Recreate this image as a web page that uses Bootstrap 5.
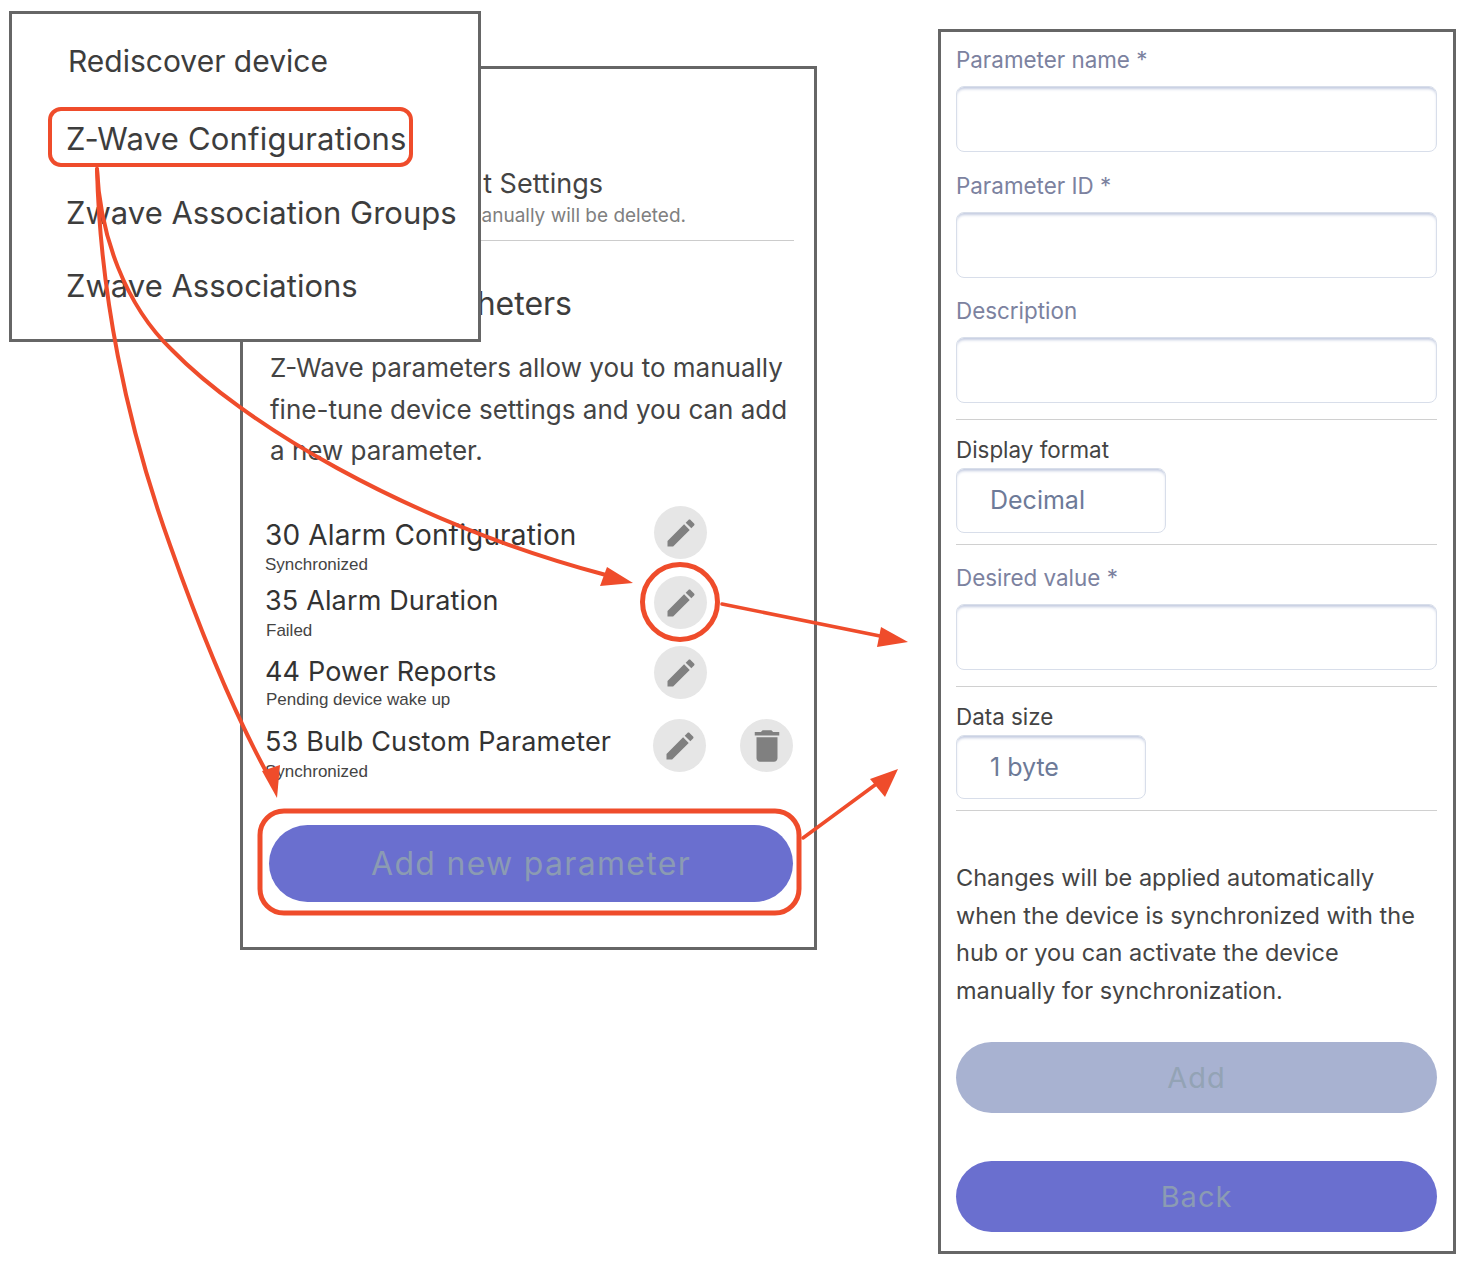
<!DOCTYPE html>
<html lang="en">
<head>
  <meta charset="UTF-8" />
  <title>Z-Wave Parameters</title>
  <link href="https://cdn.jsdelivr.net/npm/bootstrap@5.3.0/dist/css/bootstrap.min.css" rel="stylesheet">
  <style>
    body {
      background: #fff;
      font-family: "Inter", "Liberation Sans", sans-serif;
      color: #3d3d3d;
      width: 1458px;
      height: 1263px;
      position: relative;
      overflow: hidden;
    }
    .shot-win {
      position: absolute;
      background: #fff;
      border: 3px solid #666;
    }
    .win-main { left: 240px; top: 66px; width: 577px; height: 884px; padding: 98px 20px 0 27px; }
    .win-menu { left: 9px; top: 11px; width: 472px; height: 331px; padding: 16px 0 0 54px; }
    .win-form { left: 938px; top: 29px; width: 518px; height: 1225px; padding: 14px 16px 0 15px; }

    .menu-line { font-size: 31px; height: 74px; line-height: 62px; white-space: nowrap; }
    .menu-first { padding-left: 2px; height: 78px; font-size: 30px; }
    .menu-picked { letter-spacing: .2px; }
    .menu-third { height: 73px; }

    .reset-title { font-size: 27px; line-height: 34px; width: 333px; text-align: right; white-space: nowrap; color: #444; }
    .reset-note { font-size: 19px; line-height: 28px; width: 416px; text-align: right; white-space: nowrap; color: #808080; margin-top: 1px; }
    .reset-rule { border-top: 1px solid #ccc; margin-top: 10px; }
    .param-head { font-size: 32px; line-height: 40px; margin-top: 43px; width: 302px; text-align: right; color: #3d3d3d; }
    .param-intro { font-size: 26px; line-height: 41.5px; margin-top: 23px; color: #444; }
    .param-list { margin: 34.5px 0 0 -5px; }
    .param-name { font-size: 27px; line-height: 34px; color: #333; white-space: nowrap; letter-spacing: .15px; }
    .row-first .param-name { font-size: 28px; }
    .param-state { font-family: "Liberation Sans", sans-serif; font-size: 17px; line-height: 24px; color: #444; margin-top: 1px; }
    .state-inset { padding-left: 1px; }
    .row-first { height: 70px; padding-top: 12px; }
    .row-second { height: 70px; padding-top: 8px; }
    .row-third { height: 73px; padding-top: 9px; }
    .row-third .param-state { margin-top: -1px; }
    .row-fourth { height: 90px; padding-top: 6px; }
    .btn-col { margin-top: -12px; }
    .row-second .btn-col { margin-top: -8px; }
    .row-third .btn-col { margin-top: -9px; }
    .row-fourth .btn-col { margin-top: -6px; margin-right: 1px; }
    .btn-slot { width: 87px; flex: none; }
    .btn-gap { width: 53px; flex: none; }
    .round-btn {
      width: 53px;
      height: 53px;
      background: #e6e6e6;
      border-radius: 50%;
    }
    .round-btn svg { width: 36px; height: 36px; fill: #808080; }
    .round-btn svg.bin-icon { width: 42px; height: 42px; }
    .add-param {
      height: 77px;
      background: #6a6fcf;
      color: #8b9bb3;
      font-size: 32px;
      letter-spacing: 1.3px;
      border-radius: 39px;
      margin: 16px 0 0 -1px;
      border: 0;
      width: 524px;
    }

    .field-label { font-size: 22.4px; line-height: 28px; color: #7c829f; height: 40px; }
    .field-label.is-dark { color: #444; height: 30px; line-height: 24px; margin-top: 18px; }
    .field-label.after-rule { margin-top: 19px; }
    .field-box {
      height: 66px;
      border: 1px solid #d8deea;
      border-radius: 8px;
      box-shadow: inset 0 3px 3px -1px #c3cbe0;
      margin-bottom: 19.5px;
    }
    .field-box.before-rule { margin-bottom: 16.5px; }
    .field-box.first-group-end { margin-bottom: 15.5px; }
    .pick-box {
      height: 65px;
      padding-left: 33px;
      font-size: 25px;
      line-height: 62px;
      color: #6d7a98;
      margin-bottom: 11px;
    }
    .pick-wide { width: 210px; }
    .pick-narrow { width: 190px; height: 64px; }
    .field-rule { border-top: 1px solid #d0d0d0; }
    .form-note { font-size: 23.5px; line-height: 37.5px; color: #444; margin-top: 48px; }
    .pill-btn {
      height: 71px;
      width: 481px;
      border: 0;
      border-radius: 36px;
      font-size: 29px;
      letter-spacing: 1px;
    }
    .pill-off { background: #a8b2d1; color: #93a3b5; margin-top: 33px; }
    .pill-on { background: #6a6fcf; color: #8b9bb3; margin-top: 48px; }

    .mark-layer { position: absolute; left: 0; top: 0; pointer-events: none; }
  </style>
</head>
<body>

<div class="shot-win win-main">
  <div class="reset-title">t Settings</div>
  <div class="reset-note">hanually will be deleted.</div>
  <div class="reset-rule"></div>
  <div class="param-head">heters</div>
  <div class="param-intro">Z-Wave parameters allow you to manually fine-tune device settings and you can add a new parameter.</div>

  <div class="param-list">
    <div class="row-first d-flex justify-content-between">
      <div>
        <div class="param-name">30 Alarm Configuration</div>
        <div class="param-state">Synchronized</div>
      </div>
      <div class="btn-col d-flex">
        <div class="btn-slot"><div class="round-btn d-flex align-items-center justify-content-center"><svg viewBox="0 0 24 24"><path d="M3 17.25V21h3.75L17.81 9.94l-3.75-3.75L3 17.25zM20.71 7.04c.39-.39.39-1.02 0-1.41l-2.34-2.34c-.39-.39-1.02-.39-1.41 0l-1.83 1.83 3.75 3.75 1.83-1.83z"/></svg></div></div>
        <div class="btn-gap"></div>
      </div>
    </div>
    <div class="row-second d-flex justify-content-between">
      <div>
        <div class="param-name">35 Alarm Duration</div>
        <div class="param-state state-inset">Failed</div>
      </div>
      <div class="btn-col d-flex">
        <div class="btn-slot"><div class="round-btn d-flex align-items-center justify-content-center"><svg viewBox="0 0 24 24"><path d="M3 17.25V21h3.75L17.81 9.94l-3.75-3.75L3 17.25zM20.71 7.04c.39-.39.39-1.02 0-1.41l-2.34-2.34c-.39-.39-1.02-.39-1.41 0l-1.83 1.83 3.75 3.75 1.83-1.83z"/></svg></div></div>
        <div class="btn-gap"></div>
      </div>
    </div>
    <div class="row-third d-flex justify-content-between">
      <div>
        <div class="param-name">44 Power Reports</div>
        <div class="param-state state-inset">Pending device wake up</div>
      </div>
      <div class="btn-col d-flex">
        <div class="btn-slot"><div class="round-btn d-flex align-items-center justify-content-center"><svg viewBox="0 0 24 24"><path d="M3 17.25V21h3.75L17.81 9.94l-3.75-3.75L3 17.25zM20.71 7.04c.39-.39.39-1.02 0-1.41l-2.34-2.34c-.39-.39-1.02-.39-1.41 0l-1.83 1.83 3.75 3.75 1.83-1.83z"/></svg></div></div>
        <div class="btn-gap"></div>
      </div>
    </div>
    <div class="row-fourth d-flex justify-content-between">
      <div>
        <div class="param-name">53 Bulb Custom Parameter</div>
        <div class="param-state">Synchronized</div>
      </div>
      <div class="btn-col d-flex">
        <div class="btn-slot"><div class="round-btn d-flex align-items-center justify-content-center"><svg viewBox="0 0 24 24"><path d="M3 17.25V21h3.75L17.81 9.94l-3.75-3.75L3 17.25zM20.71 7.04c.39-.39.39-1.02 0-1.41l-2.34-2.34c-.39-.39-1.02-.39-1.41 0l-1.83 1.83 3.75 3.75 1.83-1.83z"/></svg></div></div>
        <div class="round-btn d-flex align-items-center justify-content-center"><svg class="bin-icon" viewBox="0 0 24 24"><path d="M6 19c0 1.1.9 2 2 2h8c1.1 0 2-.9 2-2V7H6v12zM19 4h-3.5l-1-1h-5l-1 1H5v2h14V4z"/></svg></div>
      </div>
    </div>
  </div>

  <button type="button" class="add-param d-block">Add new parameter</button>
</div>

<div class="shot-win win-menu">
  <div class="menu-line menu-first">Rediscover device</div>
  <div class="menu-line menu-picked">Z-Wave Configurations</div>
  <div class="menu-line menu-third">Zwave Association Groups</div>
  <div class="menu-line">Zwave Associations</div>
</div>

<div class="shot-win win-form">
  <div class="field-label">Parameter name *</div>
  <div class="field-box"></div>
  <div class="field-label">Parameter ID *</div>
  <div class="field-box"></div>
  <div class="field-label">Description</div>
  <div class="field-box first-group-end"></div>
  <div class="field-rule"></div>

  <div class="field-label is-dark">Display format</div>
  <div class="field-box pick-box pick-wide">Decimal</div>
  <div class="field-rule"></div>

  <div class="field-label after-rule">Desired value *</div>
  <div class="field-box before-rule"></div>
  <div class="field-rule"></div>

  <div class="field-label is-dark">Data size</div>
  <div class="field-box pick-box pick-narrow">1 byte</div>
  <div class="field-rule"></div>

  <div class="form-note">Changes will be applied automatically when the device is synchronized with the hub or you can activate the device manually for synchronization.</div>

  <button type="button" class="pill-btn pill-off d-block">Add</button>
  <button type="button" class="pill-btn pill-on d-block">Back</button>
</div>

<svg class="mark-layer" width="1458" height="1263" viewBox="0 0 1458 1263" fill="none" stroke="#ef4c2b" stroke-linecap="round">
  <rect x="50" y="109" width="361" height="56" rx="11" stroke-width="4"/>
  <rect x="260" y="811" width="539" height="102" rx="24" stroke-width="5"/>
  <circle cx="680" cy="602" r="37.5" stroke-width="5"/>
  <path d="M97 169C100 235 125 305 172 350C240 420 400 520 606 575" stroke-width="4"/>
  <path d="M97 169C100 290 125 420 170 545C200 630 235 715 268 775" stroke-width="4"/>
  <path d="M722 604L880 636" stroke-width="3.5"/>
  <path d="M803 838L875 785" stroke-width="3.5"/>
  <g fill="#ef4c2b" stroke="none">
    <path d="M633 583L600 586L607 567Z"/>
    <path d="M277 798L262 771L280 765Z"/>
    <path d="M908 642L877 647L881 627Z"/>
    <path d="M898 769L885 797L870 779Z"/>
  </g>
</svg>

<script src="https://cdn.jsdelivr.net/npm/bootstrap@5.3.0/dist/js/bootstrap.bundle.min.js"></script>
</body>
</html>
